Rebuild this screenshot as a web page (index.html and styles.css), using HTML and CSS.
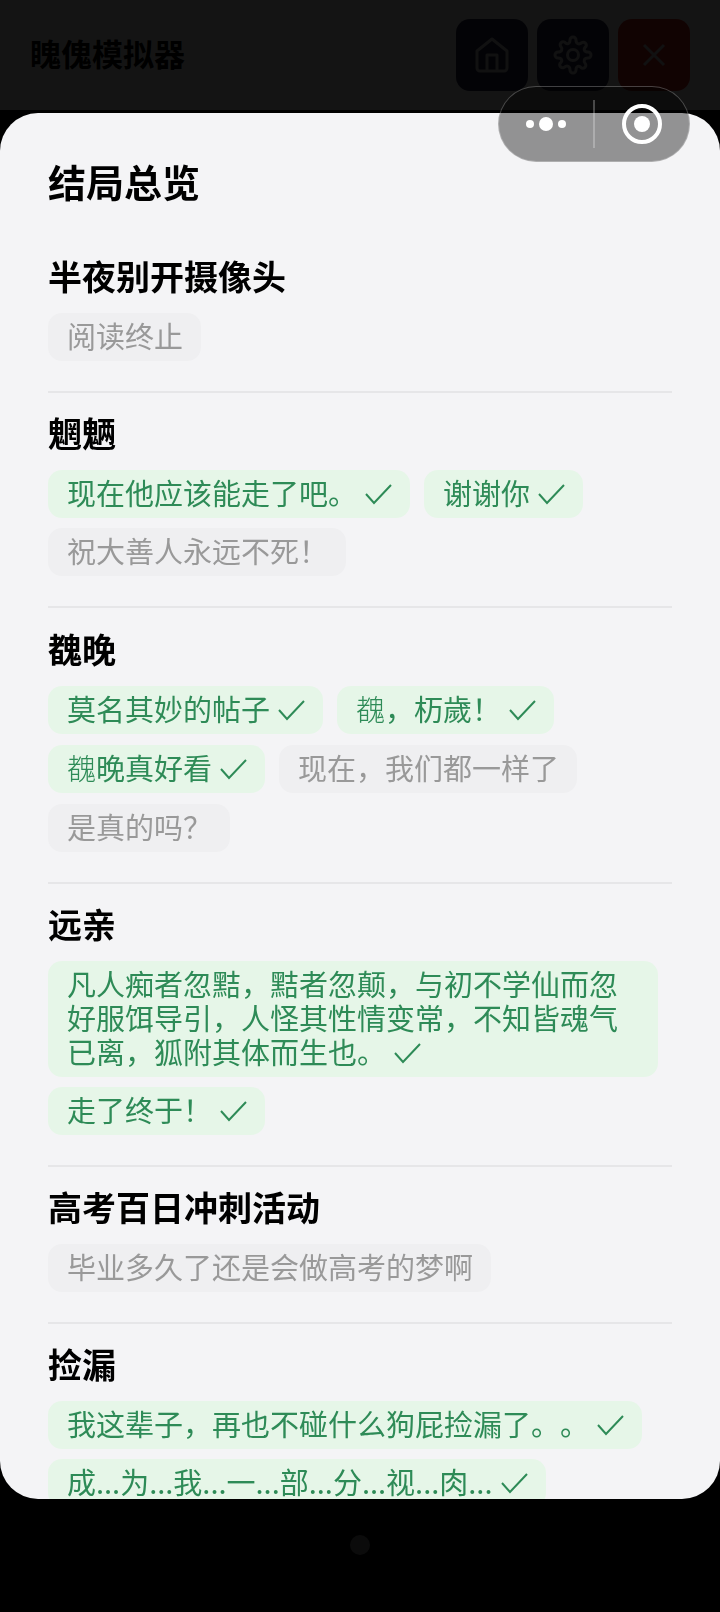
FILE: index.html
```
<!DOCTYPE html>
<html lang="zh-CN">
<head>
    <meta charset="UTF-8">
    <meta name="viewport" content="width=device-width, initial-scale=1.0">
    <title>䁛傀模拟器</title>
    <link rel="stylesheet" href="styles.css">
</head>
<body>
    <header class="top-bar">
        <h1 class="app-name">䁛傀模拟器</h1>
        <div class="top-actions">
            <button class="icon-btn" aria-label="主页">
                <svg width="36" height="36" viewBox="0 0 36 36">
                    <path d="M3 14 L18 2 L33 14 V31 a3 3 0 0 1 -3 3 H6 a3 3 0 0 1 -3 -3 Z"/>
                    <path d="M13 34 V18 H23 V34"/>
                </svg>
            </button>
            <button class="icon-btn" aria-label="设置">
                <svg width="40" height="40" viewBox="0 0 40 40">
                    <path d="M17 5 a3 3 0 0 1 6 0 C23 9 26 10 29 7.500 a3 3 0 0 1 4 4 C30 14 31 17 35 17 a3 3 0 0 1 0 6 C31 23 30 26 32.500 29 a3 3 0 0 1 -4 4 C26 30 23 31 23 35 a3 3 0 0 1 -6 0 C17 31 14 30 11 32.500 a3 3 0 0 1 -4 -4 C10 26 9 23 5 23 a3 3 0 0 1 0 -6 C9 17 10 14 7.500 11 a3 3 0 0 1 4 -4 C14 10 17 9 17 5 Z"/>
                    <circle cx="20" cy="20" r="5.500"/>
                </svg>
            </button>
            <button class="icon-btn icon-btn-close" aria-label="关闭">
                <svg width="24" height="24" viewBox="0 0 24 24">
                    <path d="M2 2 L22 22 M22 2 L2 22"/>
                </svg>
            </button>
        </div>
    </header>

    <main class="stage">
        <span class="home-dot"></span>
    </main>

    <div class="overlay">
        <div class="modal" role="dialog" aria-labelledby="modalTitle">
            <h2 class="modal-title" id="modalTitle">结局总览</h2>

            <section class="story">
                <h3>半夜别开摄像头</h3>
                <ul class="endings">
                    <li>阅读终止</li>
                </ul>
            </section>

            <section class="story">
                <h3>魍魉</h3>
                <ul class="endings">
                    <li class="done">现在他应该能走了吧。<svg class="check" viewBox="0 0 28 24"><path d="M2 12 L10 21 L27 3"/></svg></li>
                    <li class="done">谢谢你<svg class="check" viewBox="0 0 28 24"><path d="M2 12 L10 21 L27 3"/></svg></li>
                    <li>祝大善人永远不死！</li>
                </ul>
            </section>

            <section class="story story-rare">
                <h3>䰩晚</h3>
                <ul class="endings">
                    <li class="done">莫名其妙的帖子<svg class="check" viewBox="0 0 28 24"><path d="M2 12 L10 21 L27 3"/></svg></li>
                    <li class="done"><span class="rare">䰩</span>，杤歲！<svg class="check" viewBox="0 0 28 24"><path d="M2 12 L10 21 L27 3"/></svg></li>
                    <li class="done"><span class="rare">䰩</span>晚真好看<svg class="check" viewBox="0 0 28 24"><path d="M2 12 L10 21 L27 3"/></svg></li>
                    <li>现在，我们都一样了</li>
                    <li>是真的吗？</li>
                </ul>
            </section>

            <section class="story">
                <h3>远亲</h3>
                <ul class="endings">
                    <li class="done">凡人痴者忽黠，黠者忽颠，与初不学仙而忽好服饵导引，人怪其性情变常，不知皆魂气已离，狐附其体而生也。<svg class="check" viewBox="0 0 28 24"><path d="M2 12 L10 21 L27 3"/></svg></li>
                    <li class="done">走了终于！<svg class="check" viewBox="0 0 28 24"><path d="M2 12 L10 21 L27 3"/></svg></li>
                </ul>
            </section>

            <section class="story">
                <h3>高考百日冲刺活动</h3>
                <ul class="endings">
                    <li>毕业多久了还是会做高考的梦啊</li>
                </ul>
            </section>

            <section class="story">
                <h3>捡漏</h3>
                <ul class="endings">
                    <li class="done">我这辈子，再也不碰什么狗屁捡漏了。。<svg class="check" viewBox="0 0 28 24"><path d="M2 12 L10 21 L27 3"/></svg></li>
                    <li class="done">成...为...我...一...部...分...视...肉...<svg class="check" viewBox="0 0 28 24"><path d="M2 12 L10 21 L27 3"/></svg></li>
                </ul>
            </section>
        </div>
    </div>

    <div class="capsule">
        <button class="capsule-btn" aria-label="更多">
            <svg width="42" height="16" viewBox="0 0 42 16">
                <circle cx="5" cy="8" r="4"/>
                <circle cx="21" cy="8" r="7"/>
                <circle cx="37" cy="8" r="4"/>
            </svg>
        </button>
        <span class="capsule-line"></span>
        <button class="capsule-btn" aria-label="退出">
            <svg width="40" height="40" viewBox="0 0 40 40">
                <circle class="ring" cx="20" cy="20" r="18"/>
                <circle cx="20" cy="20" r="8"/>
            </svg>
        </button>
    </div>
</body>
</html>
```
FILE: styles.css
```
:root {
    --panel: #f4f4f6;
    --line: #e6e6e8;
    --green: #2e8b57;
    --green-bg: #e6f6e8;
    --gray: #999999;
    --gray-bg: #efeff1;
}

* {
    box-sizing: border-box;
}

body {
    margin: 0;
    height: 100vh;
    overflow: hidden;
    display: flex;
    flex-direction: column;
    background: #000;
    font-family: "Noto Sans CJK SC", sans-serif;
    text-spacing-trim: space-all;
}

button {
    padding: 0;
    border: none;
    background: none;
    cursor: pointer;
}

/* top bar */
.top-bar {
    display: flex;
    align-items: center;
    justify-content: space-between;
    height: 110px;
    padding: 0 30px;
    background: #fff;
}

.app-name {
    margin: 0;
    padding-bottom: 4px;
    font-size: 31px;
    line-height: 40px;
    font-weight: 700;
    color: #000;
}

.top-actions {
    display: flex;
    gap: 9px;
}

.icon-btn {
    display: flex;
    align-items: center;
    justify-content: center;
    width: 72px;
    height: 72px;
    border-radius: 14px;
    background: #2c2c50;
}

.icon-btn svg {
    fill: none;
    stroke: #d0d0d4;
    stroke-width: 3;
    stroke-linejoin: round;
}

.icon-btn-close {
    background: #d8281e;
}

.stage {
    flex: 1;
    display: flex;
    align-items: flex-end;
    justify-content: center;
    padding-bottom: 57px;
}

.home-dot {
    width: 20px;
    height: 20px;
    border-radius: 50%;
    background: #8c8c8c;
}

/* endings list */
.overlay {
    position: fixed;
    inset: 0;
    display: flex;
    align-items: center;
    background: rgba(0, 0, 0, 0.92);
}

.modal {
    width: 100%;
    height: 86vh;
    padding: 45px 48px 0;
    overflow: hidden;
    border-radius: 38px;
    background: var(--panel);
}

.modal-title {
    margin: 0 0 32px;
    font-size: 38px;
    line-height: 46px;
    font-weight: 700;
}

.story {
    padding: 18px 0 30px;
    border-bottom: 2px solid var(--line);
}

.story h3 {
    margin: 0 0 15px;
    font-size: 34px;
    line-height: 44px;
    font-weight: 700;
}

.story-rare h3 {
    line-height: 45px;
}

.endings {
    display: flex;
    flex-wrap: wrap;
    gap: 10px 14px;
    margin: 0;
    padding: 0 14px 0 0;
    list-style: none;
}

.story-rare .endings {
    row-gap: 11px;
}

.endings li {
    padding: 5px 18px 9px 19px;
    border-radius: 14px;
    font-size: 29px;
    line-height: 34px;
    color: var(--gray);
    background: var(--gray-bg);
}

.endings .done {
    color: var(--green);
    background: var(--green-bg);
}

.rare {
    font-weight: 300;
}

.check {
    width: 28px;
    height: 24px;
    margin-left: 7px;
    vertical-align: -1px;
    fill: none;
    stroke: currentColor;
    stroke-width: 2;
}

/* floating menu */
.capsule {
    position: fixed;
    top: 86px;
    right: 30px;
    display: flex;
    align-items: center;
    width: 192px;
    height: 76px;
    border: 1px solid rgba(255, 255, 255, 0.25);
    border-radius: 38px;
    background: rgba(0, 0, 0, 0.4);
}

.capsule-btn {
    flex: 1;
    display: flex;
    align-items: center;
    justify-content: center;
    height: 100%;
}

.capsule-btn svg {
    fill: #fff;
}

.capsule-btn .ring {
    fill: none;
    stroke: #fff;
    stroke-width: 4;
}

.capsule-line {
    width: 2px;
    height: 48px;
    background: rgba(255, 255, 255, 0.25);
}
```
